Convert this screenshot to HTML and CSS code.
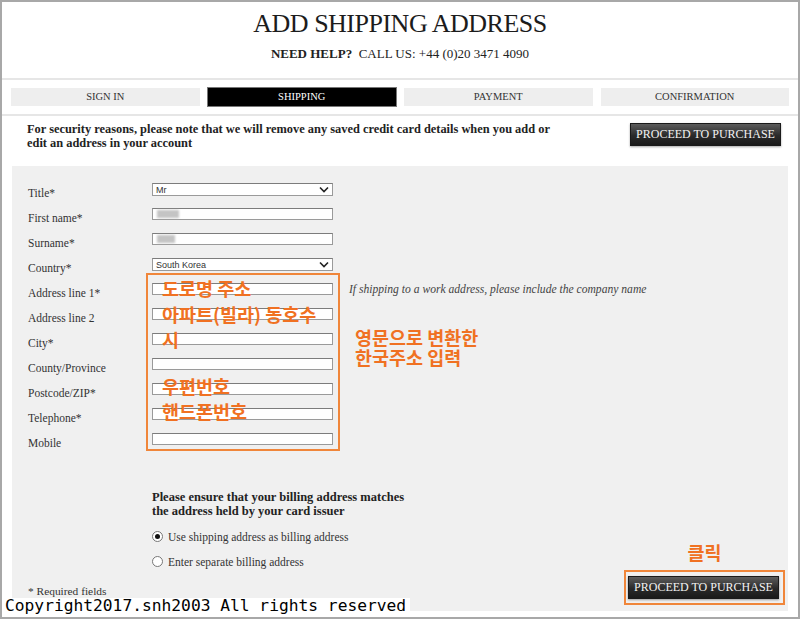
FILE: index.html
```html
<!DOCTYPE html>
<html lang="en">
<head>
    <meta charset="UTF-8">
    <meta name="viewport" content="width=device-width, initial-scale=1.0">
    <title>Add Shipping Address</title>
    <link rel="stylesheet" href="styles.css">
</head>
<body>
<div class="frame">
    <header class="page-head">
        <h1>ADD SHIPPING ADDRESS</h1>
        <p class="help"><b>NEED HELP?</b>&nbsp; CALL US: +44 (0)20 3471 4090</p>
    </header>

    <nav class="steps">
        <span class="step">SIGN IN</span>
        <span class="step active">SHIPPING</span>
        <span class="step">PAYMENT</span>
        <span class="step">CONFIRMATION</span>
    </nav>

    <div class="notice">
        <p>For security reasons, please note that we will remove any saved credit card details when you add or<br>edit an address in your account</p>
        <button class="btn">PROCEED TO PURCHASE</button>
    </div>

    <section class="panel">
        <div class="form">
            <div class="row">
                <label>Title*</label>
                <div class="select">Mr
                    <svg width="10" height="7" viewBox="0 0 10 7"><path d="M1 1.5 L5 5.5 L9 1.5" fill="none" stroke="#222" stroke-width="1.6"/></svg>
                </div>
            </div>
            <div class="row">
                <label>First name*</label>
                <div class="input"><span class="blur"></span></div>
            </div>
            <div class="row">
                <label>Surname*</label>
                <div class="input"><span class="blur short"></span></div>
            </div>
            <div class="row">
                <label>Country*</label>
                <div class="select">South Korea
                    <svg width="10" height="7" viewBox="0 0 10 7"><path d="M1 1.5 L5 5.5 L9 1.5" fill="none" stroke="#222" stroke-width="1.6"/></svg>
                </div>
            </div>
            <div class="row">
                <label>Address line 1*</label>
                <div class="input"></div>
                <span class="hint">If shipping to a work address, please include the company name</span>
            </div>
            <div class="row">
                <label>Address line 2</label>
                <div class="input"></div>
            </div>
            <div class="row">
                <label>City*</label>
                <div class="input"></div>
            </div>
            <div class="row">
                <label>County/Province</label>
                <div class="input"></div>
            </div>
            <div class="row">
                <label>Postcode/ZIP*</label>
                <div class="input"></div>
            </div>
            <div class="row">
                <label>Telephone*</label>
                <div class="input"></div>
            </div>
            <div class="row">
                <label>Mobile</label>
                <div class="input"></div>
            </div>

            <!-- annotations drawn over the form -->
            <div class="mark-box"></div>
            <span class="memo m1">도로명 주소</span>
            <span class="memo m2">아파트(빌라) 동호수</span>
            <span class="memo m3">시</span>
            <span class="memo m4">우편번호</span>
            <span class="memo m5">핸드폰번호</span>
            <span class="memo m6">영문으로 변환한<br>한국주소 입력</span>
        </div>

        <div class="lower">
            <div class="lower-left">
                <div class="billing">
                    <p class="billing-title">Please ensure that your billing address matches<br>the address held by your card issuer</p>
                    <div class="radio-row"><span class="radio checked"></span>Use shipping address as billing address</div>
                    <div class="radio-row"><span class="radio"></span>Enter separate billing address</div>
                </div>
                <p class="required">* Required fields</p>
            </div>
            <div class="lower-right">
                <span class="memo click">클릭</span>
                <div class="btn-mark">
                    <button class="btn">PROCEED TO PURCHASE</button>
                </div>
            </div>
        </div>
    </section>

    <div class="copyright">Copyright2017.snh2003 All rights reserved</div>
</div>
</body>
</html>
```

FILE: styles.css
```css
body {
    margin: 0;
    background: #fff;
    font-family: "Liberation Serif", serif;
    color: #222;
}
.frame {
    position: relative;
    width: 800px;
    height: 619px;
    box-sizing: border-box;
    border: 2px solid #a8a8a8;
    overflow: hidden;
}
p { margin: 0; }

/* header */
.page-head {
    text-align: center;
    border-bottom: 2px solid #e6e6e6;
    padding-top: 7px;
    height: 69px;
}
.page-head h1 {
    margin: 0;
    font-size: 26px;
    letter-spacing: -0.5px;
    font-weight: normal;
    line-height: 30px;
    color: #1c1c1c;
}
.help {
    margin-top: 8px;
    font-size: 13px;
    line-height: 14px;
    color: #222;
}

/* steps */
.steps {
    display: grid;
    grid-template-columns: repeat(4, 1fr);
    column-gap: 8px;
    padding: 8px 9px 8px 9px;
    border-bottom: 2px solid #e6e6e6;
}
.step {
    height: 18px;
    line-height: 18px;
    background: #eeeeee;
    text-align: center;
    font-size: 10.5px;
    color: #333;
}
.step.active {
    background: #000;
    color: #fff;
    box-shadow: 0 0 0 1px #777;
}

/* notice */
.notice {
    display: flex;
    justify-content: space-between;
    align-items: flex-start;
    height: 50px;
    box-sizing: border-box;
    padding: 6px 17px 0 25px;
}
.notice p {
    font-size: 12.4px;
    font-weight: bold;
    line-height: 14px;
    color: #222;
}
.notice .btn { margin-top: 1px; }

.btn {
    width: 151px;
    height: 23px;
    padding: 0;
    border: 1px solid #1a1a1a;
    background: linear-gradient(#5c5c5c, #2a2a2a 55%, #1a1a1a);
    color: #f2f2f2;
    font-family: "Liberation Serif", serif;
    font-size: 12px;
    box-shadow: 0 1px 2px rgba(0, 0, 0, 0.35);
    cursor: pointer;
}

/* grey panel */
.panel {
    margin: 0 10px;
    background: #f0f0f0;
    padding: 15px 3px 6px 16px;
}
.form { position: relative; }
.row {
    display: flex;
    align-items: flex-start;
    height: 25px;
}
.row label {
    width: 124px;
    flex: none;
    padding-top: 5px;
    font-size: 11.5px;
    line-height: 14px;
    color: #333;
}
.input, .select {
    position: relative;
    flex: none;
    width: 181px;
    height: 12px;
    margin-top: 2px;
    box-sizing: border-box;
    background: #fff;
    border: 1px solid #9a9a9a;
    border-top-color: #7c7c7c;
}
.select {
    height: 13px;
    display: flex;
    align-items: center;
    justify-content: space-between;
    padding: 0 3px 0 3px;
    font-family: "Liberation Sans", Arial, sans-serif;
    font-size: 9px;
    color: #333;
}
.blur {
    position: absolute;
    left: 4px;
    top: 1px;
    width: 22px;
    height: 8px;
    background: #c4c4c4;
    filter: blur(1px);
}
.blur.short { width: 18px; }
.hint {
    margin: 2px 0 0 16px;
    font-size: 11.6px;
    font-style: italic;
    color: #444;
}

/* annotations */
.mark-box {
    position: absolute;
    left: 118px;
    top: 92px;
    width: 194px;
    height: 178px;
    box-sizing: border-box;
    border: 2px solid #f0863a;
}
.memo {
    position: absolute;
    font-family: "Noto Sans CJK KR", sans-serif;
    font-weight: bold;
    font-size: 18.5px;
    line-height: 20px;
    color: #f07122;
}
.m1 { left: 134px; top: 97px; }
.m2 { left: 134px; top: 123px; }
.m3 { left: 134px; top: 148px; }
.m4 { left: 134px; top: 195px; }
.m5 { left: 134px; top: 220px; }
.m6 { left: 327px; top: 146px; }

/* lower part */
.lower {
    display: flex;
    justify-content: space-between;
    align-items: flex-end;
}
.billing {
    margin: 34px 0 0 124px;
}
.billing-title {
    font-size: 12.5px;
    font-weight: bold;
    line-height: 14px;
    color: #222;
    margin-bottom: 6px;
}
.radio-row {
    display: flex;
    align-items: center;
    height: 25px;
    font-size: 11.5px;
    color: #333;
}
.radio {
    width: 11px;
    height: 11px;
    box-sizing: border-box;
    border: 1px solid #777;
    border-radius: 50%;
    background: #fff;
    margin-right: 5px;
    position: relative;
}
.radio.checked::after {
    content: "";
    position: absolute;
    left: 2px;
    top: 2px;
    width: 5px;
    height: 5px;
    border-radius: 50%;
    background: #111;
}
.required {
    margin-top: 10px;
    margin-bottom: 7px;
    font-size: 11.4px;
    line-height: 14px;
    color: #333;
}
.lower-right {
    display: flex;
    flex-direction: column;
    align-items: center;
}
.memo.click {
    position: static;
    margin-bottom: 8px;
}
.btn-mark {
    border: 2px solid #f0863a;
    padding: 4px 4px 4px 2px;
    line-height: 0;
}

.copyright {
    position: absolute;
    left: 3px;
    bottom: 3px;
    padding-right: 4px;
    background: #fff;
    font-family: "DejaVu Sans Mono", monospace;
    font-size: 16.25px;
    line-height: 16px;
    color: #000;
}
```
